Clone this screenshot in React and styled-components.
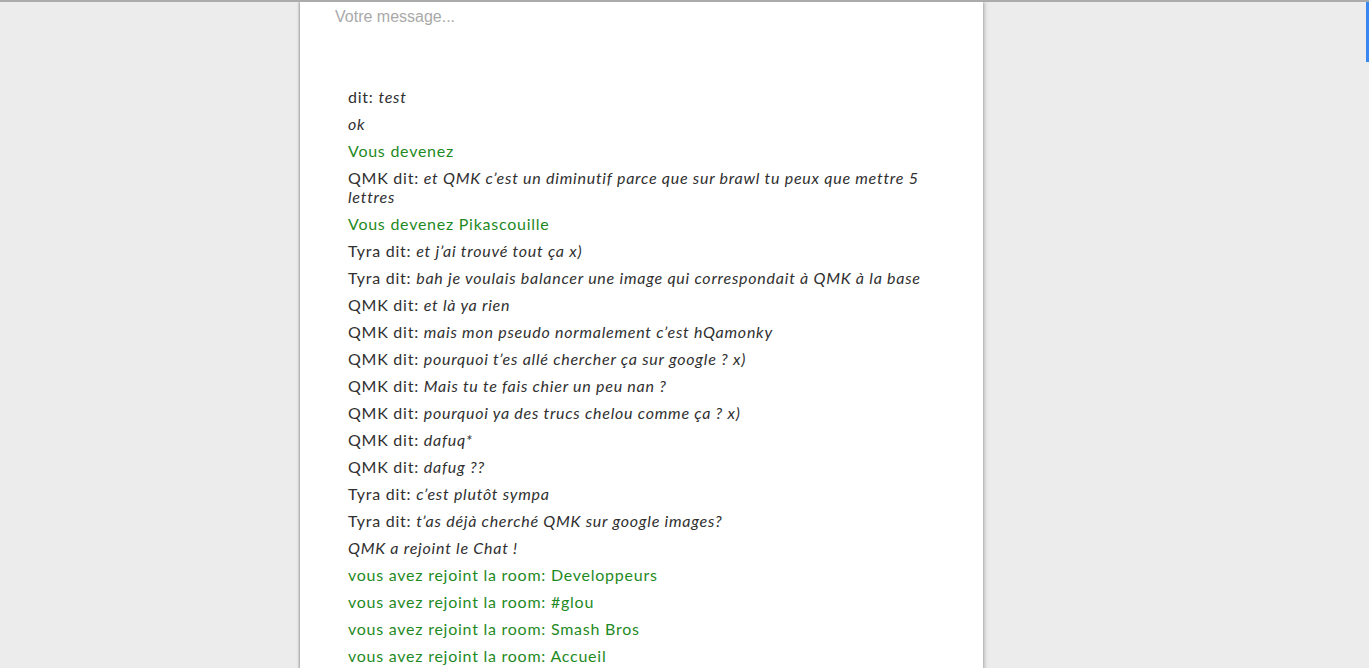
import React from 'react';
import styled, { createGlobalStyle } from 'styled-components';

const GlobalStyle = createGlobalStyle`
  html, body {
    margin: 0;
    padding: 0;
    background: #ececec;
    height: 100%;
    overflow: hidden;
  }
  body {
    border-top: 2px solid #ababab;
    box-sizing: border-box;
  }
`;

const Page = styled.div`
  display: flex;
  min-height: 666px;
  padding-left: 300px;
`;

const Panel = styled.main`
  width: 683px;
  background: #fff;
  box-shadow: -1px 0 2px rgba(0, 0, 0, 0.25), 1px 0 4px rgba(0, 0, 0, 0.3);
  display: flex;
  flex-direction: column;
`;

const MessageInput = styled.input`
  border: none;
  outline: none;
  background: transparent;
  font-family: 'Liberation Sans', Arial, sans-serif;
  font-size: 16px;
  padding: 1px 35px 5px;
  height: 28px;
  color: #333;

  &::placeholder {
    color: #a9a9a9;
  }
`;

const List = styled.ul`
  list-style: none;
  margin: 51px 0 0;
  padding: 0 48px;
  font-family: Lato, 'Open Sans', sans-serif;
  font-size: 16px;
  line-height: 19px;
  letter-spacing: 0.75px;
`;

const Item = styled.li`
  margin-bottom: 8px;
  color: ${p => (p.$notice ? '#1f8a1f' : '#303030')};
  font-style: ${p => (p.$italic ? 'italic' : 'normal')};

  em {
    font-style: italic;
  }
`;

const Scrollbar = styled.div`
  position: fixed;
  top: 2px;
  right: 0;
  width: 3px;
  height: 60px;
  background: #3b86f0;
`;

const messages = [
  { who: '', text: 'test' },
  { italic: true, text: 'ok' },
  { notice: true, text: 'Vous devenez' },
  { who: 'QMK', text: 'et QMK c\u2019est un diminutif parce que sur brawl tu peux que mettre 5 lettres' },
  { notice: true, text: 'Vous devenez Pikascouille' },
  { who: 'Tyra', text: 'et j\u2019ai trouvé tout ça x)' },
  { who: 'Tyra', text: 'bah je voulais balancer une image qui correspondait à QMK à la base' },
  { who: 'QMK', text: 'et là ya rien' },
  { who: 'QMK', text: 'mais mon pseudo normalement c\u2019est hQamonky' },
  { who: 'QMK', text: 'pourquoi t\u2019es allé chercher ça sur google ? x)' },
  { who: 'QMK', text: 'Mais tu te fais chier un peu nan ?' },
  { who: 'QMK', text: 'pourquoi ya des trucs chelou comme ça ? x)' },
  { who: 'QMK', text: 'dafuq*' },
  { who: 'QMK', text: 'dafug ??' },
  { who: 'Tyra', text: 'c\u2019est plutôt sympa' },
  { who: 'Tyra', text: 't\u2019as déjà cherché QMK sur google images?' },
  { italic: true, text: 'QMK a rejoint le Chat !' },
  { notice: true, text: 'vous avez rejoint la room: Developpeurs' },
  { notice: true, text: 'vous avez rejoint la room: #glou' },
  { notice: true, text: 'vous avez rejoint la room: Smash Bros' },
  { notice: true, text: 'vous avez rejoint la room: Accueil' },
];

export default function App() {
  return (
    <>
      <GlobalStyle />
      <Page>
        <Panel>
          <MessageInput placeholder="Votre message..." />
          <List>
            {messages.map((m, i) =>
              m.who !== undefined ? (
                <Item key={i}>
                  {m.who ? `${m.who} dit: ` : 'dit: '}
                  <em>{m.text}</em>
                </Item>
              ) : (
                <Item key={i} $notice={m.notice} $italic={m.italic}>
                  {m.text}
                </Item>
              )
            )}
          </List>
        </Panel>
      </Page>
      <Scrollbar />
    </>
  );
}
